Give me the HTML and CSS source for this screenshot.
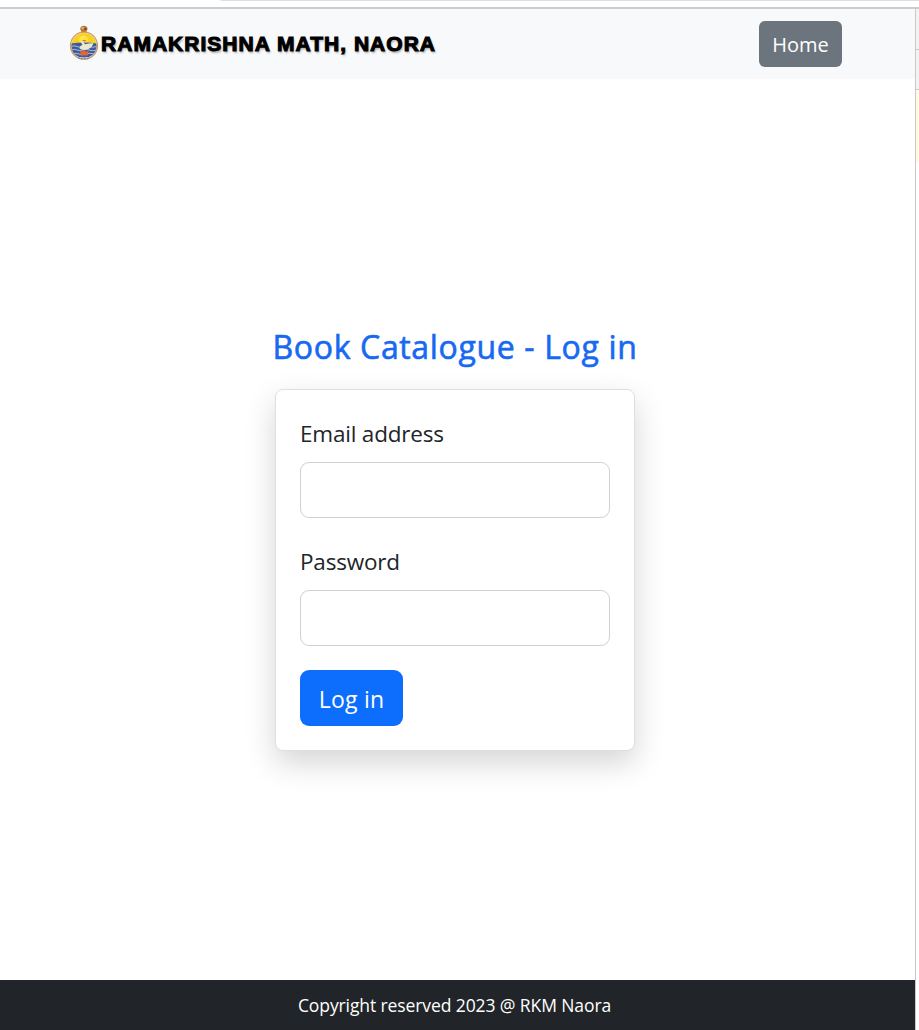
FILE: index.html
```html
<!DOCTYPE html>
<html lang="en">
<head>
<meta charset="utf-8">
<title>Book Catalogue - Log in</title>
<link rel="stylesheet" href="styles.css">
</head>
<body>
<div class="window-edge"></div>
<div class="window">
  <div class="page">
    <header class="navbar">
      <a class="brand">
        <svg class="emblem" width="30" height="36" viewBox="0 0 30 36">
          <defs><clipPath id="disc"><circle cx="15" cy="20.7" r="12.6"/></clipPath></defs>
          <path d="M12.3 8 L12 5.5 Q10.4 3.6 12 1.8 Q14.8 -.4 17.7 1.8 Q19.4 3.6 17.8 5.5 L17.3 8Z" fill="#b9743a"/>
          <circle cx="13.6" cy="3" r="1.2" fill="#e9b35e"/><circle cx="16.4" cy="4" r=".9" fill="#6f3426"/>
          <circle cx="15" cy="20.7" r="13.5" fill="#fff0d4" stroke="#c99a70" stroke-width="1.3"/>
          <g clip-path="url(#disc)">
            <path d="M2 8H28V20H2Z" fill="#f7cf25"/>
            <circle cx="14.5" cy="15" r="4.5" fill="#ffe53c"/>
            <path d="M2 18.5 Q15 16.5 28 18.5V34H2Z" fill="#3e5a9b"/>
            <path d="M2 21.5q3-1.5 6 0t6 0 6 0 8 0M2 25q3-1.5 6 0t6 0 6 0 8 0M4 29q3-1.5 6 0t6 0 10 0" fill="none" stroke="#b5c5dd" stroke-width=".9"/>
            <path d="M10.5 23.5 Q10.5 20.5 13.5 20 L12 17.3 Q11.8 15.3 14 15.2 L16 16 14.6 16.8 Q14.4 18 16.4 19.3 Q20 17.8 24.5 18.3 Q22.5 24 17 24.8 Q12.5 25.3 10.5 23.5Z" fill="#e9e8d2"/>
            <path d="M12.8 15.4l2.9-.7 1.9 1.2-2.5.7z" fill="#df733f"/>
            <path d="M11 26 L13 26.5 15 25 17 26.5 19.5 26 18.8 30.5 H11.8Z" fill="#e5642f"/>
            <path d="M6 31 Q15 33.8 24 31 V35H6Z" fill="#e6ecef"/>
          </g>
          <path d="M9 32.7 Q15 35 21 32.7" fill="none" stroke="#607daa" stroke-width="1" stroke-dasharray="2 1"/>
        </svg>
        <span class="brand-name">RAMAKRISHNA MATH, NAORA</span>
      </a>
      <a class="home">Home</a>
    </header>
    <main class="content">
      <h1 class="title">Book Catalogue - Log in</h1>
      <form class="card">
        <label class="label" for="email">Email address</label>
        <input class="field" id="email" type="email">
        <label class="label" for="password">Password</label>
        <input class="field" id="password" type="password">
        <button class="submit" type="button">Log in</button>
      </form>
    </main>
    <footer class="footer"><span>Copyright reserved 2023 @ RKM Naora</span></footer>
  </div>
  <aside class="side">
    <div class="side-tabs"></div>
    <div class="side-tools"></div>
    <div class="side-notice"></div>
  </aside>
</div>
</body>
</html>
```

FILE: styles.css
```css
* { box-sizing: border-box; }
body {
  margin: 0;
  height: 1030px;
  overflow: hidden;
  background: #fff;
  color: #212529;
  font-family: "Open Sans", "Noto Sans", sans-serif;
}
.window-edge {
  height: 9px;
  border-bottom: 2px solid #ccc;
  background: linear-gradient(90deg, transparent 219px, #dedede 222px) top / 100% 1px no-repeat;
}
.window { display: flex; height: 1021px; }
.page { width: 915px; display: flex; flex-direction: column; }
.navbar {
  height: 70px;
  padding: 0 73px 0 69px;
  display: flex;
  align-items: center;
  justify-content: space-between;
  background: #f8f9fa;
}
.brand { display: flex; align-items: center; gap: 2px; padding-bottom: 2px; }
.emblem { display: block; }
.brand-name {
  padding-top: 2px;
  font: bold 19.5px/24px "Liberation Sans", Arial, sans-serif;
  letter-spacing: .95px;
  color: #000;
  -webkit-text-stroke: 1px #000;
  text-shadow: 1px 2px 2px rgba(0, 0, 0, .3);
  white-space: nowrap;
  transform: scaleX(1.077);
  transform-origin: left center;
}
.home {
  width: 83px;
  height: 46px;
  border-radius: 6px;
  background: #6c757d;
  color: #fff;
  font-size: 20px;
  line-height: 47px;
  text-align: center;
}
.content {
  flex: 1;
  display: flex;
  flex-direction: column;
  align-items: center;
  padding: 248px 5px 0 0;
}
.title {
  margin: 0 0 22px;
  color: #1769f2;
  font-size: 32px;
  line-height: 40px;
  font-weight: 400;
  letter-spacing: .65px;
  -webkit-text-stroke: .6px #1769f2;
  white-space: nowrap;
}
.card {
  width: 360px;
  height: 362px;
  padding: 25px 24px;
  border: 1px solid #dfdfdf;
  border-radius: 8px;
  background: #fff;
  box-shadow: 0 12px 30px rgba(0, 0, 0, .17);
}
.label {
  display: block;
  height: 36px;
  margin-bottom: 11px;
  font-size: 22.5px;
  line-height: 38px;
  letter-spacing: -.2px;
}
.field {
  display: block;
  width: 310px;
  height: 56px;
  margin: 0 0 25px;
  border: 1px solid #ced1d5;
  border-radius: 9px;
  background: #fff;
}
.submit {
  display: block;
  width: 103px;
  height: 56px;
  margin-top: -1px;
  padding: 1px 0 0;
  border: 0;
  border-radius: 9px;
  background: #0d6efd;
  color: #fff;
  font: 23px/30px "Open Sans", "Noto Sans", sans-serif;
  letter-spacing: .2px;
}
.footer {
  height: 50px;
  padding-right: 6px;
  background: #212529;
  color: #fff;
  font-size: 17.5px;
  line-height: 51px;
  letter-spacing: -.1px;
  text-align: center;
}
.side { width: 4px; border-left: 1px solid #c9c9c9; }
.side-tabs { height: 41px; background: #f3f3f4; border-bottom: 1px solid #c9cbcd; }
.side-tools { height: 40px; background: #f3f3f4; border-bottom: 1px solid #c9cbcd; }
.side-notice { height: 73px; background: #fffbe3; }
```
